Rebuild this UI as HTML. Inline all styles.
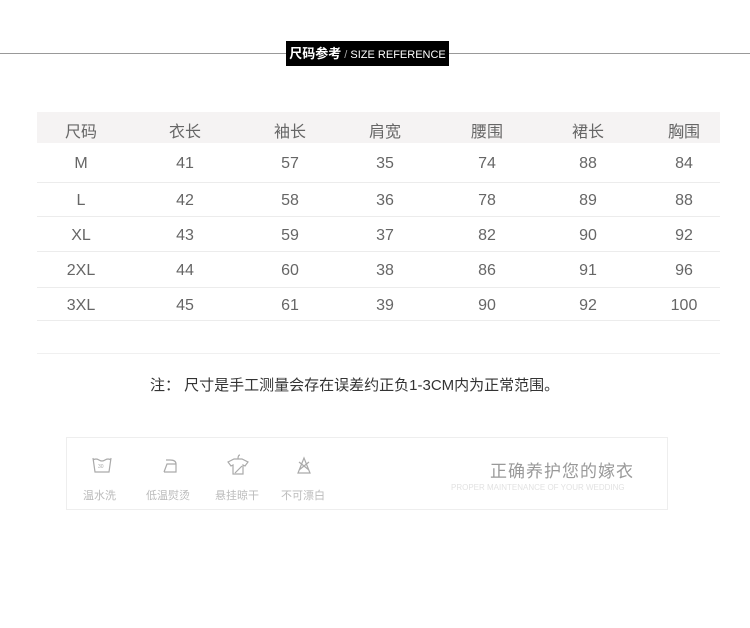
<!DOCTYPE html>
<html><head><meta charset="utf-8"><style>
body{margin:0;width:750px;height:628px;background:#fff;position:relative;overflow:hidden;font-family:"Liberation Sans","Noto Sans CJK SC",sans-serif;}
.a{position:absolute}
.row{position:absolute;left:37px;width:683px;height:1px;background:#ececec}
.c{position:absolute;width:100px;text-align:center;font-size:16px;color:#666;margin-left:-50px}
</style></head><body>
<div class="a" style="left:0;top:53px;width:750px;height:1px;background:#999"></div>
<div class="a" style="left:286px;top:41px;width:163px;height:25px;background:#000;color:#fff;font-size:11px;line-height:25px;text-align:center;white-space:nowrap"><b style="font-size:13px">尺码参考</b> <span style="color:#aaa">/</span> SIZE REFERENCE</div>
<div class="a" style="left:37px;top:112px;width:683px;height:31px;background:#f5f3f3"></div>
<div class="row" style="top:182px"></div><div class="row" style="top:216px"></div><div class="row" style="top:251px"></div><div class="row" style="top:287px"></div><div class="row" style="top:320px"></div>
<div class="row" style="top:353px;background:#f0f0f0"></div>
<div id="t"></div>
<script>
var cols=[81,185,290,385,487,588,684];
var rows=[[118,["尺码","衣长","袖长","肩宽","腰围","裙长","胸围"]],[155,["M","41","57","35","74","88","84"]],[192,["L","42","58","36","78","89","88"]],[227,["XL","43","59","37","82","90","92"]],[262,["2XL","44","60","38","86","91","96"]],[297,["3XL","45","61","39","90","92","100"]]];
var h="";rows.forEach(function(r){r[1].forEach(function(t,i){h+='<div class="c" style="left:'+cols[i]+'px;top:'+r[0]+'px">'+t+'</div>';});});
document.getElementById('t').innerHTML=h;
</script>
<div class="a" style="left:150px;top:374px;font-size:15px;color:#333;white-space:nowrap">注： 尺寸是手工测量会存在误差约正负1-3CM内为正常范围。</div>
<div class="a" style="left:66px;top:437px;width:602px;height:73px;border:1px solid #eee;box-sizing:border-box"></div>
<svg class="a" style="left:90px;top:452px" width="240" height="26" fill="none" stroke="#aaa" stroke-width="1.2">
<path d="M3 6 L5 20 H19 L21 6 M3 8 q3 -2 6 0 t6 0 t6 0"/><text x="8" y="16" font-size="5" fill="#aaa" stroke="none">30</text>
<path d="M74 20 H86 V12 Q86 8 80 8 H76 M74 20 L77 12 H86"/>
<path d="M138 10 L144 7 H152 L158 10 L155 14 L153 13 V22 H143 V13 L141 14 Z M148 7 q0-4 2-4"/><path d="M145 21 L152 14"/>
<path d="M214 6 L208 21 H220 Z M209 18 L219 10 M209 10 L219 18"/>
</svg>
<div class="a" style="left:83px;top:487px;font-size:11px;color:#bbb">温水洗</div>
<div class="a" style="left:146px;top:487px;font-size:11px;color:#bbb">低温熨烫</div>
<div class="a" style="left:215px;top:487px;font-size:11px;color:#bbb">悬挂晾干</div>
<div class="a" style="left:281px;top:487px;font-size:11px;color:#bbb">不可漂白</div>
<div class="a" style="left:490px;top:457px;font-size:17px;color:#999;letter-spacing:1px">正确养护您的嫁衣</div>
<div class="a" style="left:451px;top:483px;font-size:8px;color:#e2e2e2">PROPER MAINTENANCE OF YOUR WEDDING</div>
</body></html>
